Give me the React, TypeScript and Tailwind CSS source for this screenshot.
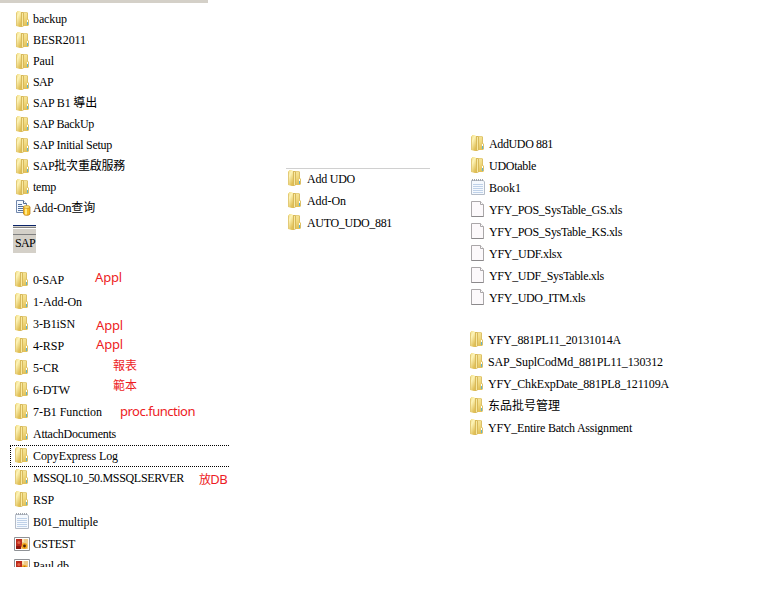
import { useLayoutEffect, useRef, useState } from "react";
import type { ReactNode } from "react";

type IconKind = "folder" | "query" | "note" | "file" | "db";

interface Entry {
  name: string;
  width: number;
  icon?: IconKind;
  note?: ReactNode;
  focused?: boolean;
}

function FolderIcon() {
  return (
    <svg width="14" height="16" viewBox="0 0 14 16" className="block">
      <defs>
        <linearGradient id="leaf" x1="0" y1="0" x2="0.6" y2="1">
          <stop offset="0" stopColor="#eed781" />
          <stop offset="0.4" stopColor="#fdf4b8" />
          <stop offset="1" stopColor="#e0bf56" />
        </linearGradient>
        <linearGradient id="panel" x1="0" y1="0" x2="0.4" y2="1">
          <stop offset="0" stopColor="#f7e9a6" />
          <stop offset="0.5" stopColor="#f2dc84" />
          <stop offset="1" stopColor="#e3c25a" />
        </linearGradient>
      </defs>
      <path d="M5 1H11L12 2V8L13 9V14L12 15H5Z" fill="url(#panel)" />
      <path d="M11 1.5L11.5 2V8.5L12.5 9.5V14" fill="none" stroke="#dcc069" />
      <path d="M5 1.5H11" stroke="#e6cf80" />
      <path d="M5 1H7L8 2V15L6 16H5Z" fill="#d8b95a" />
      <path d="M6 2H7V15H6Z" fill="#f8e9a2" />
      <path d="M0 1H1V0H4L5 1V16H4L0 15Z" fill="url(#leaf)" />
      <path d="M0 2H1V15H0Z" fill="#e3ca78" />
      <path d="M11 9H12V11H11Z" fill="#fff" />
      <path d="M11 11H12V14H11Z" fill="#62b4cc" />
    </svg>
  );
}

function QueryIcon() {
  return (
    <svg width="15" height="16" viewBox="0 0 15 16" className="block">
      <path d="M0.5 0.5H7.5L10.5 3.5V12.5H0.5Z" fill="#f3f8ff" stroke="#7187ad" />
      <path d="M7.5 0.5V3.5H10.5" fill="#fff" stroke="#52698e" />
      <path d="M2 4.5H6M2 6.5H8M2 8.5H7M2 10.5H7" stroke="#55719b" />
      <path d="M7.5 7V14C8 15.8 13.5 15.8 14 14V7Z" fill="#f4bd27" stroke="#b77612" strokeWidth="0.7" />
      <path d="M9 7.5V14.6H11V7.5Z" fill="#ffe98b" />
      <ellipse cx="10.75" cy="7" rx="3.25" ry="1.4" fill="#ffe477" stroke="#c68a1a" strokeWidth="0.7" />
    </svg>
  );
}

function NoteIcon() {
  return (
    <svg width="14" height="16" viewBox="0 0 14 16" className="block">
      <path d="M0.5 1.5H12.5L13.5 3V15.5H0.5Z" fill="#f5f9fe" stroke="#b4bcc8" />
      <path d="M2 5.5H12M2 7.5H12M2 9.5H12M2 11.5H12M2 13.5H12" stroke="#bfd1e8" />
      <path d="M1 1H13" stroke="#a0a5ad" strokeWidth="2" strokeDasharray="1 1" />
    </svg>
  );
}

function FileIcon() {
  return (
    <svg width="14" height="16" viewBox="0 0 14 16" className="block">
      <path d="M0.5 0.5H9.5L12.5 3.5V15.5H0.5Z" fill="#fcf9fb" stroke="#aaa7a9" />
      <path d="M9.5 0.5V3.5H12.5" fill="#fff" stroke="#aaa7a9" />
      <path d="M0.5 15.5H12.5" stroke="#8b898b" />
    </svg>
  );
}

function DbIcon() {
  return (
    <svg width="16" height="14" viewBox="0 0 16 14" className="block">
      <path d="M0.5 0.5H15.5V13.5H0.5Z" fill="#fff" stroke="#8f9296" />
      <path d="M2 2H14V12H2Z" fill="#edcb8c" />
      <path d="M2 2H8V9L6 12H2Z" fill="#bd2b1c" />
      <circle cx="4.8" cy="5.5" r="1.5" fill="#e0674a" />
      <path d="M2 9H7V12H2Z" fill="#8c170e" />
      <circle cx="10.5" cy="9" r="2.9" fill="#f2a519" />
      <circle cx="10.5" cy="9" r="1.4" fill="#4b2410" />
      <path d="M8 2H10V5H8Z" fill="#fbe7b5" />
    </svg>
  );
}

const icons: Record<IconKind, () => ReactNode> = {
  folder: FolderIcon,
  query: QueryIcon,
  note: NoteIcon,
  file: FileIcon,
  db: DbIcon,
};

/** A single line of text whose tracking is adjusted to fill the given width. */
function FitText({ text, width }: { text: string; width: number }) {
  const ref = useRef<HTMLSpanElement>(null);
  const [tracking, setTracking] = useState(0);
  useLayoutEffect(() => {
    if (!ref.current) return;
    const natural = ref.current.getBoundingClientRect().width;
    setTracking((width - natural) / text.length);
  }, [text, width]);
  const parts = text.split(/([\u4e00-\u9fff]+)/).filter(Boolean);
  return (
    <span ref={ref} className="inline-block whitespace-pre" style={{ letterSpacing: tracking }}>
      {parts.map((part, i) =>
        /[\u4e00-\u9fff]/.test(part) ? (
          <span key={i} className="text-[12px]">{part}</span>
        ) : (
          part
        ),
      )}
    </span>
  );
}

function Row({ entry, className }: { entry: Entry; className: string }) {
  const kind = entry.icon ?? "folder";
  const Icon = icons[kind];
  return (
    <li className={`relative flex shrink-0 items-center ${className}`}>
      {entry.focused && (
        <span className="absolute -left-[5px] top-0 h-[22px] w-[219px] border border-r-0 border-dotted border-black" />
      )}
      <span className={`icon shrink-0 ${kind === "db" ? "-ml-px mr-px" : "pb-[2px]"}`}>
        <Icon />
      </span>
      <FitText text={entry.name} width={entry.width} />
      {entry.note}
    </li>
  );
}

/** Red remark written next to a row. */
function Note({ text, width, className }: { text: string; width: number; className: string }) {
  return (
    <span
      className={`flex font-['Noto_Sans','Noto_Sans_CJK_TC',sans-serif] text-[13px] leading-4 text-[#ed1c24] ${className}`}
    >
      <FitText text={text} width={width} />
    </span>
  );
}

const drive: Entry[] = [
  { name: "backup", width: 34 },
  { name: "BESR2011", width: 53 },
  { name: "Paul", width: 21 },
  { name: "SAP", width: 20 },
  { name: "SAP B1 導出", width: 64 },
  { name: "SAP BackUp", width: 61 },
  { name: "SAP Initial Setup", width: 79 },
  { name: "SAP批次重啟服務", width: 92 },
  { name: "temp", width: 23 },
  { name: "Add-On查询", width: 62, icon: "query" },
];

const sap: Entry[] = [
  { name: "0-SAP", width: 31, note: <Note text="Appl" width={27} className="ml-[31px] pb-[6px]" /> },
  { name: "1-Add-On", width: 49 },
  { name: "3-B1iSN", width: 42, note: <Note text="Appl" width={27} className="ml-[21px] pt-[2px]" /> },
  { name: "4-RSP", width: 31, note: <Note text="Appl" width={27} className="ml-[32px] pb-[4px]" /> },
  { name: "5-CR", width: 26, note: <Note text="報表" width={24} className="ml-[54px] pb-[6px]" /> },
  { name: "6-DTW", width: 37, note: <Note text="範本" width={24} className="ml-[43px] pb-[10px]" /> },
  { name: "7-B1 Function", width: 69, note: <Note text="proc.function" width={75} className="ml-[18px] pb-[2px]" /> },
  { name: "AttachDocuments", width: 83 },
  { name: "CopyExpress Log", width: 85, focused: true },
  { name: "MSSQL10_50.MSSQLSERVER", width: 151, note: <Note text="放DB" width={28} className="ml-[15px] pt-[2px]" /> },
  { name: "RSP", width: 21 },
  { name: "B01_multiple", width: 65, icon: "note" },
  { name: "GSTEST", width: 42, icon: "db" },
  { name: "Paul.db", width: 36, icon: "db" },
];

const addOn: Entry[] = [
  { name: "Add UDO", width: 48 },
  { name: "Add-On", width: 39 },
  { name: "AUTO_UDO_881", width: 85 },
];

const udo: Entry[] = [
  { name: "AddUDO 881", width: 64 },
  { name: "UDOtable", width: 47 },
  { name: "Book1", width: 32, icon: "note" },
  { name: "YFY_POS_SysTable_GS.xls", width: 133, icon: "file" },
  { name: "YFY_POS_SysTable_KS.xls", width: 133, icon: "file" },
  { name: "YFY_UDF.xlsx", width: 73, icon: "file" },
  { name: "YFY_UDF_SysTable.xls", width: 115, icon: "file" },
  { name: "YFY_UDO_ITM.xls", width: 96, icon: "file" },
];

const functions: Entry[] = [
  { name: "YFY_881PL11_20131014A", width: 133 },
  { name: "SAP_SuplCodMd_881PL11_130312", width: 175 },
  { name: "YFY_ChkExpDate_881PL8_121109A", width: 181 },
  { name: "东品批号管理", width: 72 },
  { name: "YFY_Entire Batch Assignment", width: 144 },
];

export default function App() {
  return (
    <main className="flex h-[614px] w-[768px] items-start overflow-hidden bg-white font-['Liberation_Serif','Noto_Sans_CJK_TC',serif] text-[12px] leading-5 text-black">
      <section className="w-[286px] shrink-0">
        <div className="h-[3px] w-[208px] bg-[#d4d0c8]" />
        <ul className="pl-4 pt-[5px]">
          {drive.map((entry) => (
            <Row key={entry.name} entry={entry} className="h-[21px] [&>.icon]:w-[17px] [&>.icon]:pb-0" />
          ))}
        </ul>
        <div className="ml-[13px] mt-[7px] h-[28px] w-[23px] overflow-hidden bg-[#d4d0c8]">
          <div className="h-px bg-[#0a246a]" />
          <div className="mt-px h-px bg-[#808080]" />
          <div className="h-px bg-white" />
          <div className="mt-[5px] h-px bg-[#808080]" />
          <div className="pl-[2px] leading-[17px]">
            <FitText text="SAP" width={20} />
          </div>
        </div>
        <ul className="mt-[16px] flex h-[298px] flex-col overflow-hidden pl-[15px]">
          {sap.map((entry) => (
            <Row key={entry.name} entry={entry} className="h-[22px] [&>.icon]:w-[18px]" />
          ))}
        </ul>
      </section>
      <section className="w-[184px] shrink-0 pt-[168px]">
        <div className="h-px w-[144px] bg-[#d0d0d0]" />
        <ul className="-mt-px pl-[2px]">
          {addOn.map((entry) => (
            <Row key={entry.name} entry={entry} className="h-[22px] [&>.icon]:w-[19px]" />
          ))}
        </ul>
      </section>
      <section className="flex flex-1 flex-col gap-5 pt-[133px]">
        <ul className="pl-px">
          {udo.map((entry) => (
            <Row key={entry.name} entry={entry} className="h-[22px] [&>.icon]:w-[18px]" />
          ))}
        </ul>
        <ul>
          {functions.map((entry) => (
            <Row key={entry.name} entry={entry} className="h-[22px] [&>.icon]:w-[18px]" />
          ))}
        </ul>
      </section>
    </main>
  );
}
